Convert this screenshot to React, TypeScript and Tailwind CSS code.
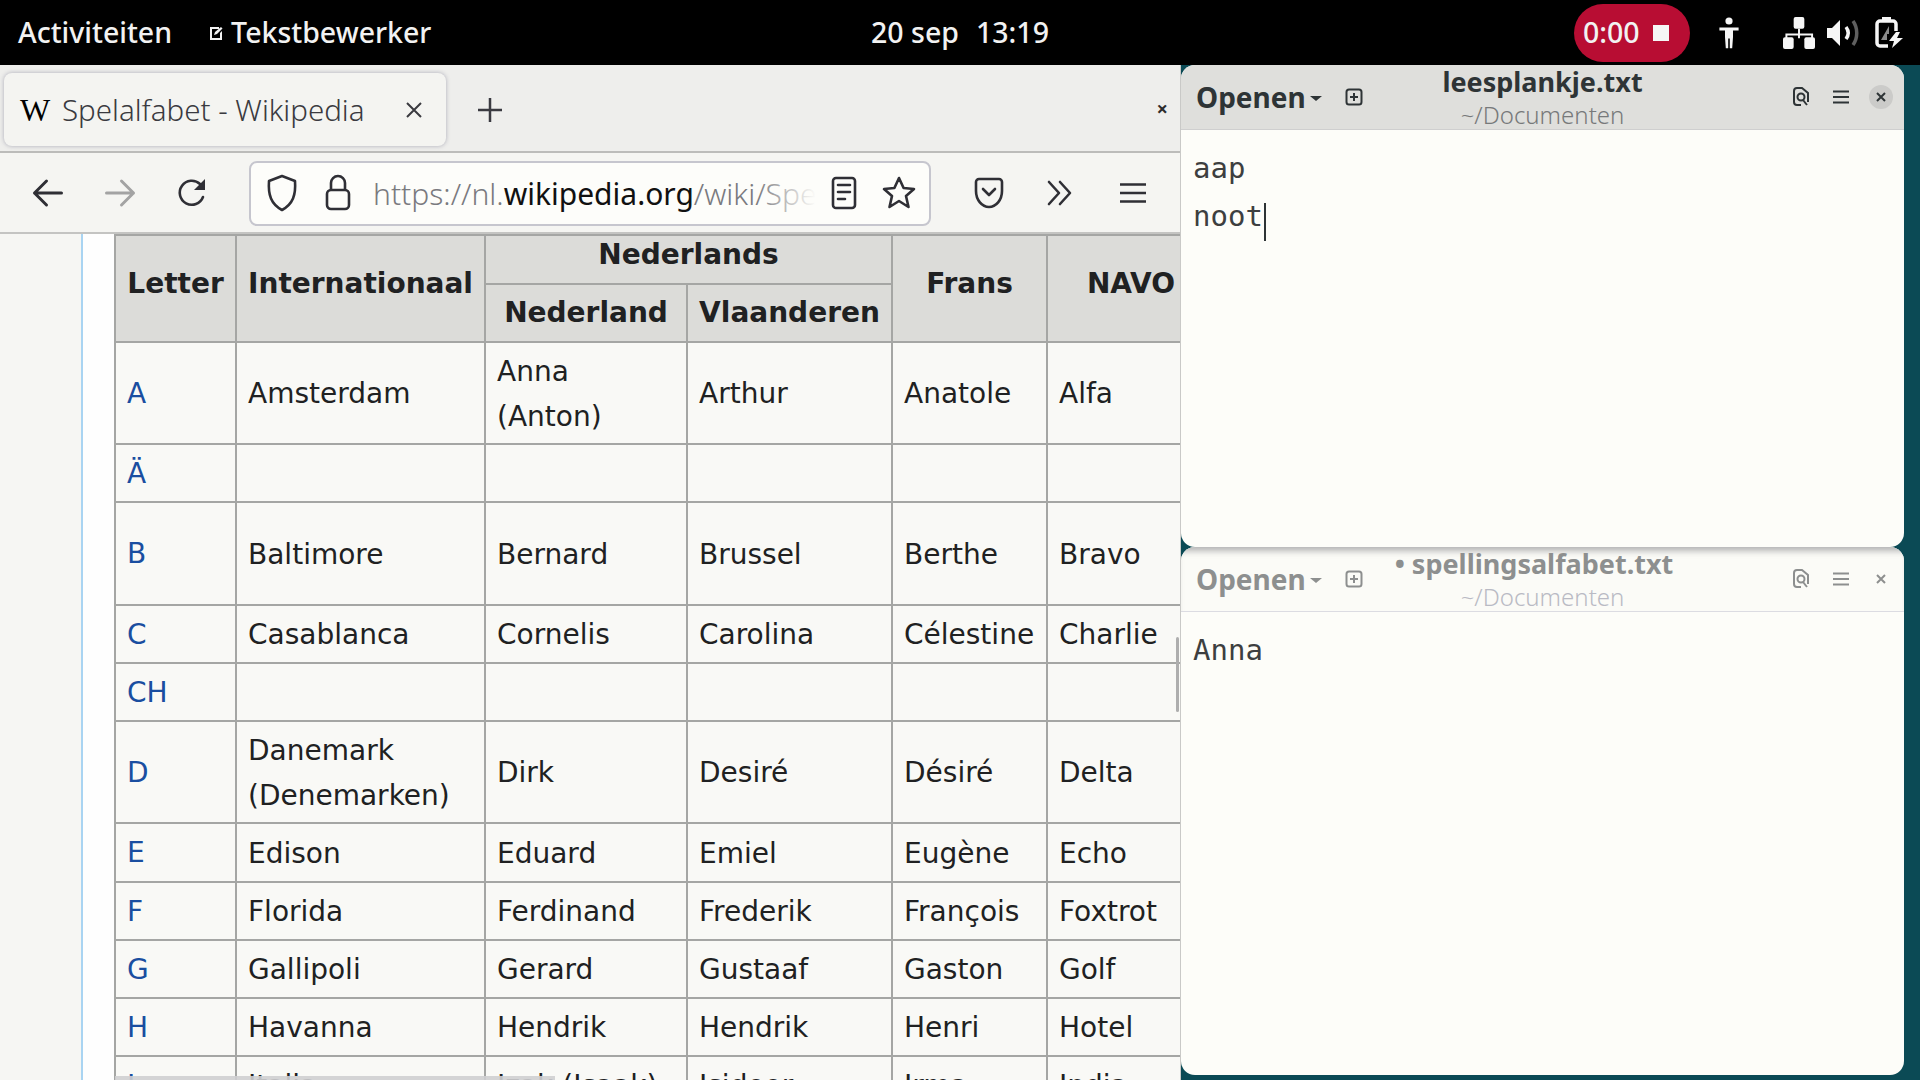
import { ReactNode } from 'react';

const ROWS: { l: string; h: string; cells?: ReactNode[] }[] = [
  { l: 'A', h: 'h-[102px]', cells: ['Amsterdam', <>Anna<br />(Anton)</>, 'Arthur', 'Anatole', 'Alfa'] },
  { l: 'Ä', h: 'h-[58px]' },
  { l: 'B', h: 'h-[103px]', cells: ['Baltimore', 'Bernard', 'Brussel', 'Berthe', 'Bravo'] },
  { l: 'C', h: 'h-[58px]', cells: ['Casablanca', 'Cornelis', 'Carolina', 'Célestine', 'Charlie'] },
  { l: 'CH', h: 'h-[58px]' },
  { l: 'D', h: 'h-[102px]', cells: [<>Danemark<br />(Denemarken)</>, 'Dirk', 'Desiré', 'Désiré', 'Delta'] },
  { l: 'E', h: 'h-[59px]', cells: ['Edison', 'Eduard', 'Emiel', 'Eugène', 'Echo'] },
  { l: 'F', h: 'h-[58px]', cells: ['Florida', 'Ferdinand', 'Frederik', 'François', 'Foxtrot'] },
  { l: 'G', h: 'h-[58px]', cells: ['Gallipoli', 'Gerard', 'Gustaaf', 'Gaston', 'Golf'] },
  { l: 'H', h: 'h-[58px]', cells: ['Havanna', 'Hendrik', 'Hendrik', 'Henri', 'Hotel'] },
  { l: 'I', h: 'h-[58px]', cells: ['Italia', 'Izak (Isaak)', 'Isidoor', 'Irma', 'India'] },
];

const TD = 'border-2 border-[#a5a6a4] px-[11px] pt-[1px] pb-0 align-middle';
const TH = 'border-2 border-[#a5a6a4] px-[11px] py-0 leading-[30px] text-center font-bold bg-[#dcdcd9]';
const TH_UP = 'border-2 border-[#a5a6a4] px-[11px] pt-0 pb-[10px] leading-[30px] text-center font-bold bg-[#dcdcd9]';

function Icon({ size, vb = 24, className, children }: { size: number; vb?: number; className?: string; children: ReactNode }) {
  return (
    <svg
      width={size}
      height={size}
      viewBox={`0 0 ${vb} ${vb}`}
      fill="none"
      stroke="currentColor"
      strokeWidth={2}
      strokeLinecap="round"
      strokeLinejoin="round"
      className={className}
    >
      {children}
    </svg>
  );
}

function TopBar() {
  return (
    <header className="h-[65px] shrink-0 bg-black text-[#f2f2f2] grid grid-cols-[1fr_auto_1fr] items-center font-['Noto_Sans',sans-serif] text-[28.500px] font-medium">
      <div className="flex items-center pl-[18px]">
        <span>Activiteiten</span>
        <svg width="16" height="16" viewBox="0 0 16 16" className="ml-[36px] mr-[7px]">
          <path d="M3 2h8v2H4v9h8V8l2-2v9H2V2z" fill="#f2f2f2" />
          <path d="M6 10l1-3 6-5 1.500 1.500L9 9z" fill="#f2f2f2" />
        </svg>
        <span>Tekstbewerker</span>
      </div>
      <div className="flex gap-[17px]">
        <span>20 sep</span>
        <span>13:19</span>
      </div>
      <div className="flex items-center justify-end pr-[17px]">
        <div className="h-[58px] w-[116px] rounded-full bg-[#b80d33] flex items-center pl-[9px]">
          <span>0:00</span>
          <span className="ml-[13px] w-[16px] h-[16px] bg-[#f6f6f6]" />
        </div>
        {/* accessibility */}
        <svg width="24" height="32" viewBox="0 0 24 40" className="ml-[27px]" fill="#f6f6f6">
          <circle cx="12" cy="5" r="4.500" />
          <path d="M0 13h24v4h-7v8l-1 14h-3V27h-2v12H8L7 25v-8H0z" />
        </svg>
        {/* network */}
        <svg width="32" height="32" viewBox="0 0 33 33" className="ml-[42px]" fill="#f6f6f6">
          <rect x="11" y="0" width="11" height="12" rx="2" />
          <path d="M15.500 12h2v5h13.500v5h-2v-3h-11.500v3h-2v-3h-11v3h-2v-5h13z" />
          <rect x="0" y="21" width="11" height="12" rx="2" />
          <rect x="22" y="21" width="11" height="12" rx="2" />
        </svg>
        {/* volume */}
        <svg width="32" height="28" viewBox="0 0 32 28" className="ml-[12px]" fill="none">
          <path d="M0 9h5l8-8v26l-8-8H0z" fill="#f6f6f6" />
          <path d="M19 8c3 4 3 8 0 12" stroke="#f6f6f6" strokeWidth="3.500" />
          <path d="M26 2c5 7 5 17 0 24" stroke="#5f5f5f" strokeWidth="3.500" />
        </svg>
        {/* battery */}
        <svg width="28" height="31" viewBox="0 0 28 31" className="ml-[16px]" fill="none">
          <path d="M7 0h9v4H7z" fill="#f6f6f6" />
          <path d="M13 29H5a3 3 0 0 1-3-3V7a3 3 0 0 1 3-3h13a3 3 0 0 1 3 3v7" stroke="#f6f6f6" strokeWidth="3.500" />
          <path d="M6 23l8-14v8h-2v6z" fill="#8a8a8a" />
          <path d="M21 15l-7 9h5l-2 7 11-10h-6l3-6z" fill="#f6f6f6" />
        </svg>
      </div>
    </header>
  );
}

function Browser() {
  return (
    <section className="relative w-[1181px] shrink-0 flex flex-col overflow-hidden bg-[#f6f6f3] border-r border-[#c9c9c7]">
      {/* tabs */}
      <div className="h-[88px] shrink-0 flex items-center bg-[#eeeeec] border-b-2 border-[#bcbcba] relative font-['Noto_Sans',sans-serif] text-[#3a3a40]">
        <div className="ml-[4px] mt-[2px] w-[442px] h-[73px] rounded-[8px] bg-[#f4f4f1] shadow-[0_0_4px_rgba(90,90,120,0.45)] flex items-center pl-[16px] pt-[2px]">
          <span className="w-[30px] text-center text-[32px] leading-none text-black font-['Liberation_Serif',serif]">W</span>
          <span className="ml-[12px] text-[29.500px] font-light">Spelalfabet - Wikipedia</span>
          <svg width="18" height="18" viewBox="0 0 18 18" className="ml-[40px]" stroke="#3a3a40" strokeWidth="2">
            <path d="M2 2l14 14M16 2L2 16" />
          </svg>
        </div>
        <svg width="26" height="26" viewBox="0 0 26 26" className="ml-[31px] mt-[4px]" stroke="#3a3a40" strokeWidth="2.500">
          <path d="M13 1v24M1 13h24" />
        </svg>
        <span className="absolute right-[12px] top-[34px] text-[#2c2c2c] text-[20px] font-bold leading-none">×</span>
      </div>

      {/* nav */}
      <div className="h-[81px] shrink-0 flex items-center pt-[1px] bg-[#f5f5f2] border-b-2 border-[#c4c4c2] text-[#2f2f35]">
        <Icon size={36} className="ml-[30px]">
          <path d="M21 12H3M11 4l-8 8 8 8" />
        </Icon>
        <Icon size={36} className="ml-[36px] text-[#a3a3a3]">
          <path d="M3 12h18M13 4l8 8-8 8" />
        </Icon>
        <svg width="32" height="34" viewBox="0 0 32 34" className="ml-[38px]" fill="none">
          <path d="M27 21a12 12 0 1 1-3-13l3 3" stroke="currentColor" strokeWidth="2.600" strokeLinecap="round" />
          <path d="M29 3v11H18z" fill="currentColor" />
        </svg>

        <div className="ml-[41px] w-[682px] h-[65px] rounded-[8px] bg-[#fdfdfa] border-2 border-[#c6c6ce] flex items-center">
          <svg width="32" height="38" viewBox="0 0 32 38" className="ml-[15px]" fill="none" stroke="currentColor" strokeWidth="2.600" strokeLinejoin="round">
            <path d="M16 2l13 5c1 14-2 23-13 29C5 30 2 21 3 7z" />
          </svg>
          <svg width="26" height="38" viewBox="0 0 26 38" className="ml-[27px]" fill="none" stroke="currentColor" strokeWidth="2.600">
            <path d="M6 16V9a7 7 0 0 1 14 0v7" />
            <rect x="2" y="16" width="22" height="19" rx="4" />
          </svg>
          <div className="relative ml-[22px] w-[443px] overflow-hidden whitespace-nowrap font-['Noto_Sans',sans-serif] text-[30px] text-[#7a7a7f] font-light">
            https://nl.<span className="text-[#111] font-normal">wikipedia.org</span>/wiki/Spelalfabet
            <span className="absolute inset-y-0 right-0 w-[60px] bg-gradient-to-r from-transparent to-[#fdfdfa]" />
          </div>
          <svg width="26" height="34" viewBox="0 0 26 34" className="ml-[15px]" fill="none" stroke="currentColor" strokeWidth="2.600" strokeLinecap="round">
            <rect x="2" y="2" width="22" height="30" rx="3" />
            <path d="M7 9h12M7 16h12M7 23h7" />
          </svg>
          <svg width="34" height="34" viewBox="0 0 34 34" className="ml-[25px]" fill="none" stroke="currentColor" strokeWidth="2.600" strokeLinejoin="round">
            <path d="M17 2l4.600 10 10.400 1-8 7 2.500 11L17 25l-9.500 6L10 20l-8-7 10.400-1z" />
          </svg>
        </div>

        <svg width="30" height="32" viewBox="0 0 30 32" className="ml-[43px]" fill="none" stroke="currentColor" strokeWidth="2.600" strokeLinecap="round" strokeLinejoin="round">
          <path d="M5 2h20a3 3 0 0 1 3 3v9c0 9-6 16-13 16S2 23 2 14V5a3 3 0 0 1 3-3z" />
          <path d="M9 12l6 6 6-6" />
        </svg>
        <svg width="28" height="28" viewBox="0 0 28 28" className="ml-[42px]" fill="none" stroke="currentColor" strokeWidth="2.600" strokeLinecap="round" strokeLinejoin="round">
          <path d="M3 3l10 11L3 25M14 3l10 11-10 11" />
        </svg>
        <svg width="26" height="22" viewBox="0 0 26 22" className="ml-[46px]" stroke="currentColor" strokeWidth="2.600">
          <path d="M0 2.500h26M0 11h26M0 19.500h26" />
        </svg>
      </div>

      {/* page */}
      <div className="flex-1 min-h-0 flex overflow-hidden bg-[#f6f6f3] font-['DejaVu_Sans',sans-serif] text-[28px] text-[#202122]">
        <div className="w-[81px] shrink-0" />
        <div className="w-[33px] shrink-0 bg-[#fefefe] border-l-2 border-[#a9d4f2]" />
        <table className="table-fixed border-collapse bg-[#f9f9f6] self-start w-[1100px] shrink-0">
          <colgroup>
            <col className="w-[121px]" />
            <col className="w-[249px]" />
            <col className="w-[202px]" />
            <col className="w-[205px]" />
            <col className="w-[155px]" />
            <col className="w-[168px]" />
          </colgroup>
          <thead>
            <tr className="h-[49px]">
              <th rowSpan={2} className={TH_UP}>Letter</th>
              <th rowSpan={2} className={TH_UP}>Internationaal</th>
              <th colSpan={2} className={TH_UP}>Nederlands</th>
              <th rowSpan={2} className={TH_UP}>Frans</th>
              <th rowSpan={2} className={TH_UP}>NAVO</th>
            </tr>
            <tr className="h-[58px]">
              <th className={TH}>Nederland</th>
              <th className={TH}>Vlaanderen</th>
            </tr>
          </thead>
          <tbody>
            {ROWS.map((row) => (
              <tr key={row.l} className={row.h}>
                <td className={`${TD} text-[#1a4ea0]`}>{row.l}</td>
                {row.cells
                  ? row.cells.map((c, i) => <td key={i} className={`${TD} leading-[45px]`}>{c}</td>)
                  : [0, 1, 2, 3, 4].map((i) => <td key={i} className={TD} />)}
              </tr>
            ))}
          </tbody>
        </table>
      </div>

      {/* overlay scrollbars */}
      <div className="absolute left-[115px] bottom-0 w-[440px] h-[4px] bg-[#cfcfd2]/90" />
      <div className="absolute right-[1px] top-[572px] w-[3px] h-[75px] bg-[#aeaeae] rounded-full" />
    </section>
  );
}

function EditorWindow({
  title,
  lines,
  active,
  className,
}: {
  title: string;
  lines: ReactNode[];
  active: boolean;
  className: string;
}) {
  const ink = active ? 'text-[#2e3436]' : 'text-[#8d8f8f]';
  return (
    <div className={`flex flex-col bg-[#fdfdf9] overflow-hidden ${className}`}>
      <div
        className={`h-[65px] shrink-0 grid grid-cols-[1fr_auto_1fr] items-center font-['Noto_Sans',sans-serif] ${ink} ${
          active ? 'bg-[#dfdfdc] border-b border-[#cfcfcf]' : 'bg-[#fbfbf7] border-b border-[#dcdce2] shadow-[inset_0_8px_6px_-4px_rgba(120,120,125,0.55)]'
        }`}
      >
        <div className="flex items-center pl-[15px]">
          <span className="text-[28px] font-bold">Openen</span>
          <span className="ml-[4px] mt-[2px] w-0 h-0 border-x-[6px] border-x-transparent border-t-[5px] border-t-current" />
          <svg width="18" height="18" viewBox="0 0 18 18" className="ml-[23px]" fill="none" stroke="currentColor" strokeWidth="2">
            <rect x="1.500" y="1.500" width="15" height="15" rx="2.500" />
            <path d="M9 5v8M5 9h8" />
          </svg>
        </div>
        <div className="flex flex-col items-center leading-none pt-[2px]">
          <span className={`text-[27px] font-bold leading-[30px] ${active ? '' : 'pr-[17px]'}`}>{title}</span>
          <span className={`mt-[4px] text-[24px] font-light leading-[28px] ${active ? 'text-[#77797a]' : 'text-[#b9bac4]'}`}>~/Documenten</span>
        </div>
        <div className="flex items-center justify-end pr-[11px]">
          <svg width="16" height="20" viewBox="0 0 16 20" fill="none" stroke="currentColor" strokeWidth="2">
            <path d="M8 18H4a3 3 0 0 1-3-3V4a3 3 0 0 1 3-3h5l6 5v9" />
            <circle cx="8" cy="10" r="3.500" />
            <path d="M10 13l4 5" />
          </svg>
          <svg width="16" height="14" viewBox="0 0 16 14" className="ml-[24px]" stroke="currentColor" strokeWidth="2">
            <path d="M0 1.500h16M0 7h16M0 12.500h16" />
          </svg>
          <div className={`ml-[20px] w-[24px] h-[24px] rounded-full flex items-center justify-center ${active ? 'bg-[#cbcbc9]' : ''}`}>
            <svg width="10" height="10" viewBox="0 0 10 10" stroke="currentColor" strokeWidth="2">
              <path d="M1 1l8 8M9 1L1 9" />
            </svg>
          </div>
        </div>
      </div>
      <div className="pl-[12px] pt-[14px] font-['DejaVu_Sans_Mono',monospace] text-[#3d3f40] text-[29px] leading-[48px]">
        {lines.map((l, i) => (
          <div key={i}>{l}</div>
        ))}
      </div>
    </div>
  );
}

export default function App() {
  return (
    <div className="w-[1920px] h-[1080px] flex flex-col overflow-hidden bg-[#0b4a55]">
      <TopBar />
      <div className="flex-1 min-h-0 flex">
        <Browser />
        <div className="w-[723px] shrink-0 flex flex-col pb-[5px]">
          <EditorWindow
            title="leesplankje.txt"
            active
            className="h-[482px] rounded-t-[14px] rounded-b-[14px]"
            lines={[
              'aap',
              <span key="noot" className="relative">
                noot
                <span className="absolute right-[-3px] top-[4px] h-[38px] w-[1.500px] bg-[#2e3436]" />
              </span>,
            ]}
          />
          <EditorWindow
            title="• spellingsalfabet.txt"
            active={false}
            className="flex-1 rounded-t-[14px] rounded-b-[14px]"
            lines={['Anna']}
          />
        </div>
      </div>
    </div>
  );
}
